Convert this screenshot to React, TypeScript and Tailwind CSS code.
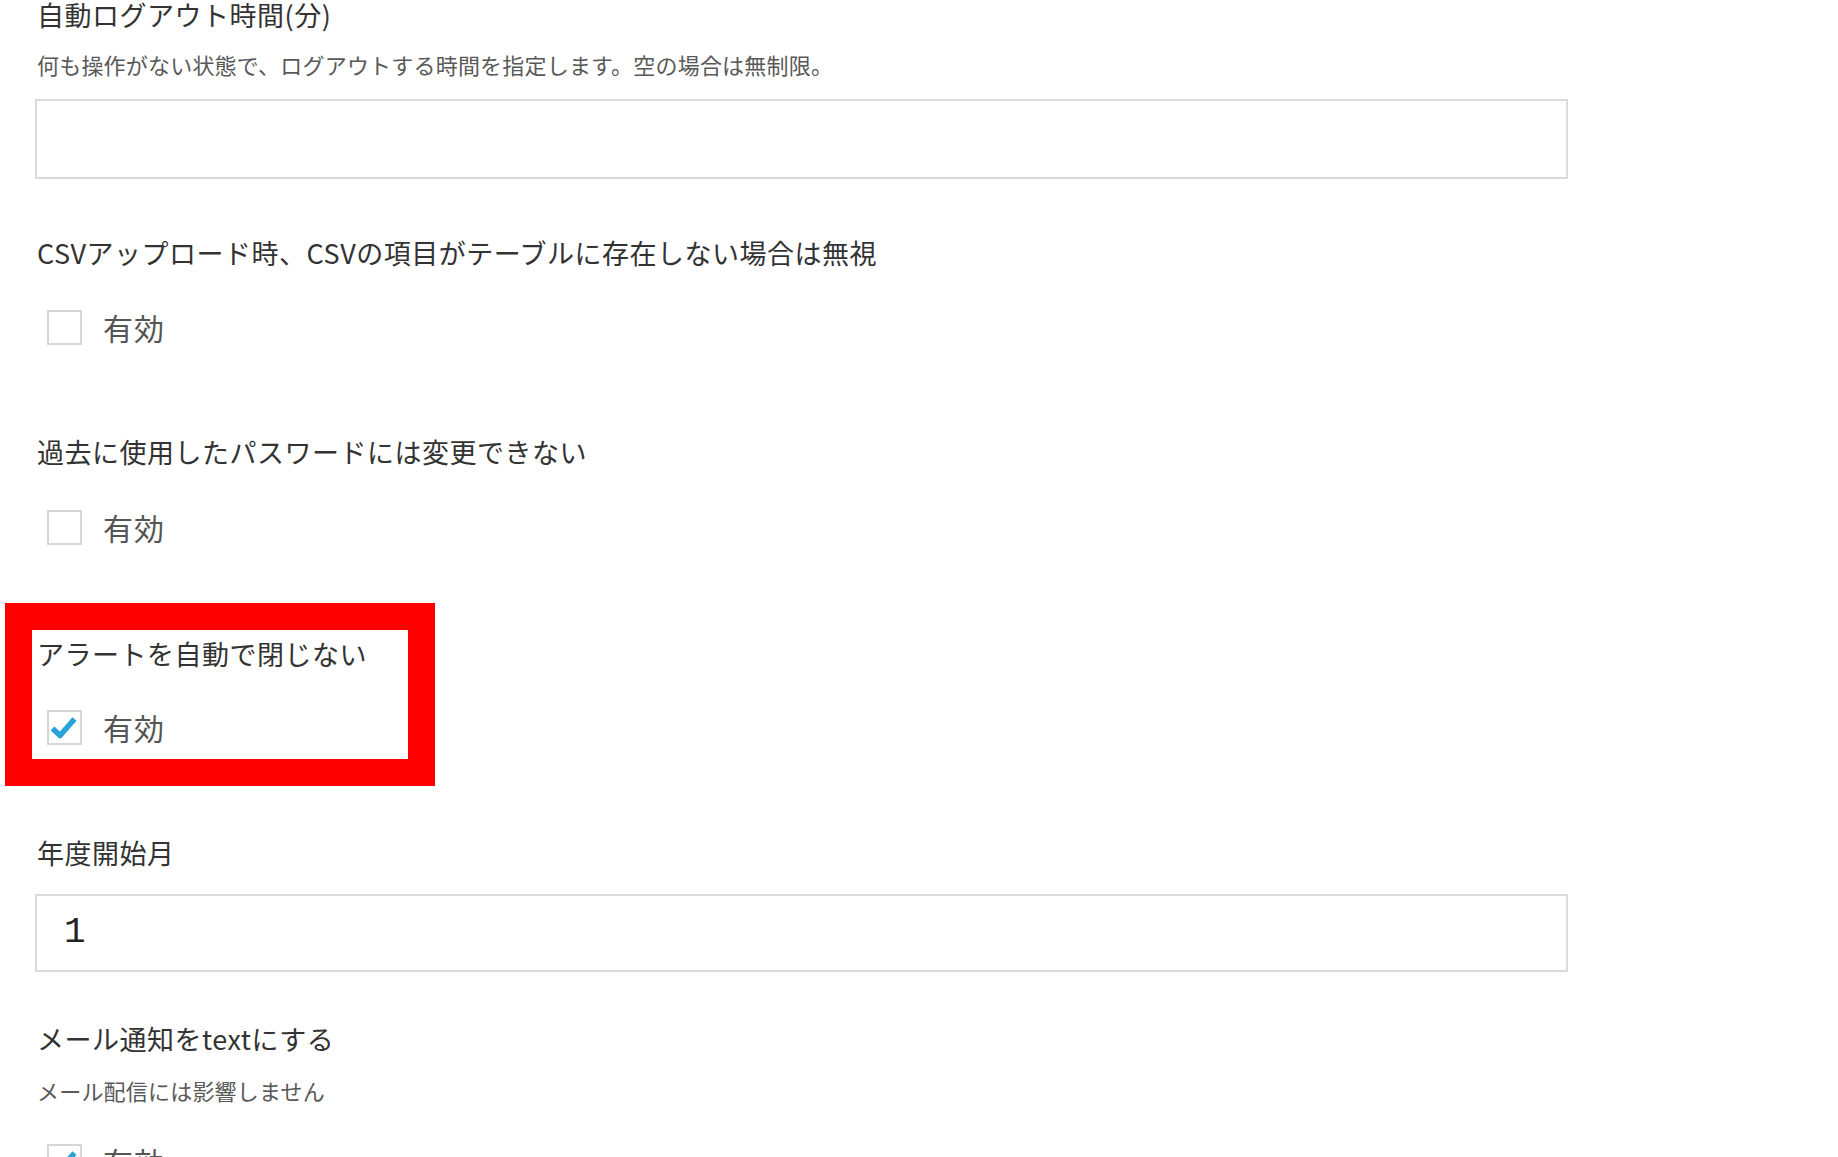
import React from 'react';

const jp = "font-['Noto_Sans_CJK_JP','Noto_Sans',sans-serif]";

const FieldLabel: React.FC<{ children: React.ReactNode }> = ({ children }) => (
    <div className={`h-[30px] pl-[2px] text-[27px] leading-[30px] tracking-[0.5px] text-[#333333] whitespace-nowrap ${jp}`}>{children}</div>
);

const Description: React.FC<{ children: React.ReactNode }> = ({ children }) => (
    <div className={`h-[24px] pl-[2px] text-[22px] leading-[24px] tracking-[0.2px] text-[#595959] whitespace-nowrap ${jp}`}>{children}</div>
);

const TextInput: React.FC<{ value?: string; height: string }> = ({ value, height }) => (
    <div className={`${height} w-[1533px] border-2 border-[#dadada] bg-white flex items-center pl-[27px]`}>
        <span className="font-['Liberation_Mono',monospace] text-[36px] leading-none text-[#222222]">{value}</span>
    </div>
);

const CheckRow: React.FC<{ checked?: boolean }> = ({ checked }) => (
    <div className="flex items-center h-[36px] pl-[12px]">
        <div className="w-[35px] h-[35px] border-2 border-[#d6d6d6] bg-white flex items-center justify-center">
            {checked && (
                <svg width="31" height="31" viewBox="0 0 31 31">
                    <path d="M3.5 16.5 L11 23.5 L25.5 7" fill="none" stroke="#27a3da" strokeWidth="5.5" strokeLinejoin="round" />
                </svg>
            )}
        </div>
        <span className={`ml-[21px] text-[30px] leading-[36px] tracking-[1px] text-[#555555] ${jp}`}>有効</span>
    </div>
);

export default function App() {
    return (
        <main className="min-h-screen w-full bg-white pl-[35px] overflow-hidden">
            <div className="h-[1157px] flex flex-col">
                {/* 自動ログアウト */}
                <FieldLabel>自動ログアウト時間(分)</FieldLabel>
                <div className="mt-[22px]">
                    <Description>何も操作がない状態で、ログアウトする時間を指定します。空の場合は無制限。</Description>
                </div>
                <div className="mt-[23px]">
                    <TextInput height="h-[80px]" />
                </div>

                {/* CSV */}
                <div className="mt-[59px]">
                    <FieldLabel>CSVアップロード時、CSVの項目がテーブルに存在しない場合は無視</FieldLabel>
                </div>
                <div className="mt-[41px]">
                    <CheckRow />
                </div>

                {/* パスワード */}
                <div className="mt-[92px]">
                    <FieldLabel>過去に使用したパスワードには変更できない</FieldLabel>
                </div>
                <div className="mt-[42px]">
                    <CheckRow />
                </div>

                {/* アラート (highlighted) */}
                <div className="relative mt-[94px]">
                    <FieldLabel>アラートを自動で閉じない</FieldLabel>
                    <div className="mt-[40px]">
                        <CheckRow checked />
                    </div>
                    <div className="absolute left-[-30px] top-[-36px] w-[430px] h-[183px] border-[27px] border-[#ff0000] pointer-events-none" />
                </div>

                {/* 年度開始月 */}
                <div className="mt-[93px]">
                    <FieldLabel>年度開始月</FieldLabel>
                </div>
                <div className="mt-[26px]">
                    <TextInput value="1" height="h-[78px]" />
                </div>

                {/* メール通知 */}
                <div className="mt-[52px]">
                    <FieldLabel>メール通知をtextにする</FieldLabel>
                </div>
                <div className="mt-[24px]">
                    <Description>メール配信には影響しません</Description>
                </div>
                <div className="mt-[41px]">
                    <CheckRow checked />
                </div>
            </div>
        </main>
    );
}
